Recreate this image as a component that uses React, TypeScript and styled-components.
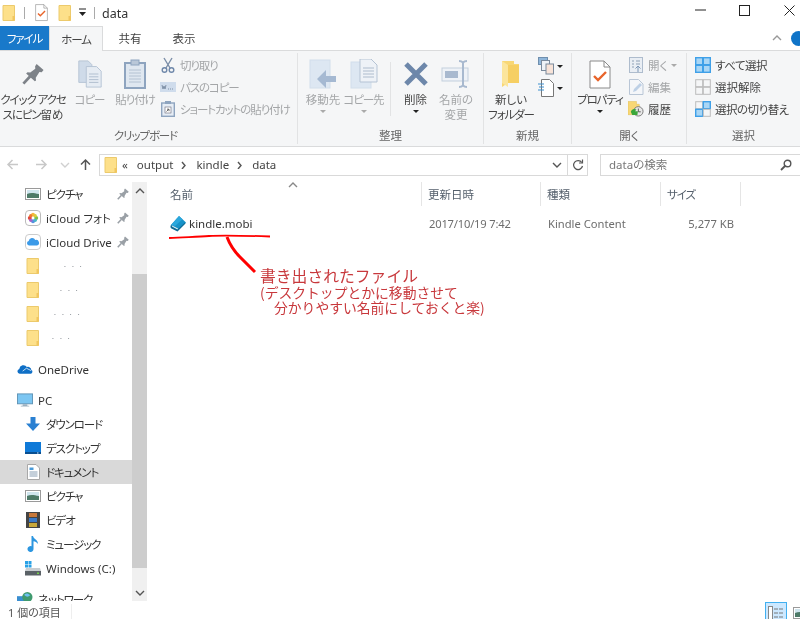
import React from "react";
import styled, { createGlobalStyle } from "styled-components";

const Global = createGlobalStyle`
  html, body { margin: 0; padding: 0; background: #fff; }
  * { box-sizing: border-box; }
`;

const Win = styled.div`
  position: relative;
  width: 800px;
  height: 619px;
  overflow: hidden;
  display: flex;
  flex-direction: column;
  background: #fff;
  color: #333;
  font-family: "Noto Sans", "Noto Sans CJK JP", sans-serif;
  font-size: 11.5px;
  line-height: 15px;
  font-feature-settings: "palt";
  filter: blur(0.25px);
`;

// katakana runs sit much tighter in the original UI font
const Kana = styled.span`
  letter-spacing: -1.1px;
`;
const Tight = styled.span`
  letter-spacing: -0.5px;
`;
const DateText = styled.span`
  letter-spacing: -0.2px;
`;

/* title bar */
const TitleBar = styled.div`
  height: 26px;
  flex: none;
  display: flex;
  align-items: center;
  padding-left: 1px;
`;
const QuickDivider = styled.span<{ $l: number }>`
  width: 1px;
  height: 12px;
  background: #aaa;
  margin: 0 10px 0 ${(p) => p.$l}px;
`;
const QuickCheck = styled.span`
  display: flex;
  margin-right: 9px;
`;
const QuickArrow = styled.svg`
  margin-left: 4px;
`;
const TitleText = styled.span`
  font-size: 12.5px;
  margin-left: -3px;
  color: #333;
`;
const WinButtons = styled.div`
  margin-left: auto;
  margin-right: -12px;
  display: flex;
  align-self: flex-start;
`;
const WinButton = styled.span<{ $w: number }>`
  width: ${(p) => p.$w}px;
  height: 20px;
  display: flex;
  align-items: center;
  justify-content: center;
`;

/* tabs */
const Tabs = styled.div`
  height: 25px;
  flex: none;
  display: flex;
  align-items: stretch;
  border-bottom: 1px solid #dadbdc;
`;
const Tab = styled.div<{ $kind?: "file" | "active" }>`
  width: ${(p) => (p.$kind === "file" ? 49 : 54)}px;
  margin-bottom: ${(p) => (p.$kind === "active" ? -1 : 0)}px;
  display: flex;
  align-items: center;
  justify-content: center;
  font-size: 11.5px;
  background: ${(p) => (p.$kind === "file" ? "#1979ca" : p.$kind === "active" ? "#f5f6f7" : "transparent")};
  color: ${(p) => (p.$kind === "file" ? "#fff" : "#444")};
  border: ${(p) => (p.$kind === "active" ? "1px solid #dadbdc" : "none")};
  border-bottom: none;
`;
const TabEnd = styled.div`
  margin-left: auto;
  display: flex;
  align-items: center;
  gap: 9px;
  margin-right: -6px;
`;
const HelpDot = styled.span`
  width: 15px;
  height: 15px;
  border-radius: 50%;
  background: #0f74c8;
`;

/* ribbon */
const Ribbon = styled.div`
  height: 96px;
  flex: none;
  display: flex;
  background: #f5f6f7;
  border-bottom: 1px solid #dadbdc;
  padding-top: 2px;
`;
const Group = styled.div<{ $w: number; $last?: boolean }>`
  width: ${(p) => p.$w}px;
  flex: none;
  display: flex;
  flex-direction: column;
  margin-bottom: 2px;
  border-right: ${(p) => (p.$last ? "none" : "1px solid #e2e3e4")};
`;
const GroupBody = styled.div<{ $pad?: number }>`
  flex: 1;
  display: flex;
  min-height: 0;
  padding-left: ${(p) => p.$pad ?? 0}px;
`;
const GroupLabel = styled.div<{ $shift?: number }>`
  height: 19px;
  text-align: center;
  color: #666;
  font-size: 11.5px;
  line-height: 22px;
  padding-right: ${(p) => p.$shift ?? 0}px;
`;
const BigButton = styled.div<{ $w: number; $off?: boolean }>`
  width: ${(p) => p.$w}px;
  flex: none;
  display: flex;
  flex-direction: column;
  align-items: center;
  text-align: center;
  white-space: nowrap;
  color: ${(p) => (p.$off ? "#a4a6a8" : "#444")};
`;
const BigIcon = styled.div`
  height: 39px;
  flex: none;
  width: 100%;
  display: flex;
  align-items: center;
  justify-content: center;
  padding-top: 3px;
`;
const BigLabel = styled.div`
  flex: none;
`;
const InnerRule = styled.span`
  width: 1px;
  height: 54px;
  margin: 9px 0 0 10px;
  background: #e2e3e4;
  flex: none;
`;
const SmallCol = styled.div<{ $w: number; $pad?: number }>`
  width: ${(p) => p.$w}px;
  flex: none;
  display: flex;
  flex-direction: column;
  padding: 1px 0 0 ${(p) => p.$pad ?? 0}px;
`;
const SmallRow = styled.div<{ $off?: boolean }>`
  height: 22px;
  display: flex;
  align-items: center;
  gap: 4px;
  white-space: nowrap;
  color: ${(p) => (p.$off ? "#a4a6a8" : "#444")};
`;
const SmallIcon = styled.span`
  width: 16px;
  height: 16px;
  flex: none;
  display: flex;
  align-items: center;
  justify-content: center;
`;
const Drop = styled.span<{ $off?: boolean }>`
  width: 0;
  height: 0;
  border-left: 3px solid transparent;
  border-right: 3px solid transparent;
  border-top: 3px solid ${(p) => (p.$off ? "#aaa" : "#222")};
  flex: none;
`;
const DropRow = styled.div`
  height: 6px;
  margin-top: 1px;
  flex: none;
  display: flex;
  align-items: center;
`;
const IconStack = styled.div`
  display: flex;
  flex-direction: column;
  gap: 4px;
  padding-top: 4px;
`;
const IconPair = styled.div`
  display: flex;
  align-items: center;
  gap: 3px;
`;

/* address bar */
const AddressRow = styled.div`
  height: 35px;
  flex: none;
  display: flex;
  align-items: center;
`;
const NavIcons = styled.div`
  width: 99px;
  flex: none;
  display: flex;
  align-items: center;
  padding-left: 6px;
`;
const NavSlot = styled.span<{ $w: number }>`
  width: ${(p) => p.$w}px;
  flex: none;
  display: flex;
  justify-content: center;
`;
const AddressBox = styled.div`
  width: 489px;
  height: 22px;
  flex: none;
  display: flex;
  align-items: center;
  border: 1px solid #d9d9d9;
  padding-left: 3px;
  font-size: 11.5px;
  color: #444;
`;
const Crumb = styled.span<{ $gap: number }>`
  margin-right: ${(p) => p.$gap}px;
`;
const Chev = styled.span<{ $gap: number }>`
  margin-right: ${(p) => p.$gap}px;
  display: flex;
`;
const AddressTail = styled.div`
  margin-left: auto;
  display: flex;
  height: 100%;
  align-items: center;
`;
const RefreshCell = styled.span`
  width: 20px;
  height: 100%;
  display: flex;
  align-items: center;
  justify-content: center;
  border-left: 1px solid #d9d9d9;
`;
const SearchBox = styled.div`
  flex: 1;
  height: 22px;
  margin-left: 12px;
  border: 1px solid #d9d9d9;
  border-right: none;
  display: flex;
  align-items: center;
  padding: 0 8px;
  color: #777;
  font-size: 11.5px;
`;
const SearchGlyph = styled.svg`
  margin-left: auto;
`;

/* body */
const Body = styled.div`
  flex: 1;
  min-height: 0;
  display: flex;
`;
const NavPane = styled.div`
  width: 132px;
  flex: none;
  overflow: hidden;
`;
const NavItem = styled.div<{ $depth?: number; $sel?: boolean; $gap?: boolean }>`
  height: 24px;
  display: flex;
  align-items: center;
  white-space: nowrap;
  font-size: 11.5px;
  padding-left: ${(p) => (p.$depth === 0 ? 17 : 25)}px;
  margin-top: ${(p) => (p.$gap ? 7 : 0)}px;
  background: ${(p) => (p.$sel ? "#d9d9d9" : "transparent")};
  color: #333;
`;
const NavIcon = styled.span`
  width: 16px;
  height: 16px;
  flex: none;
  display: flex;
  align-items: center;
  justify-content: center;
  margin-right: 5px;
`;
const Pin = styled.span`
  margin-left: auto;
  margin-right: 3px;
  display: flex;
`;
const Smudge = styled.span<{ $at: number }>`
  margin-left: ${(p) => p.$at}px;
  letter-spacing: 6px;
  font-size: 7px;
  color: #7d838a;
`;
const ScrollBar = styled.div`
  width: 15px;
  flex: none;
  background: #f0f0f0;
  display: flex;
  flex-direction: column;
`;
const ScrollArrow = styled.div`
  height: 17px;
  display: flex;
  align-items: center;
  justify-content: center;
`;
const ScrollGap = styled.div<{ $h: number }>`
  height: ${(p) => p.$h}px;
  flex: none;
`;
const ScrollThumb = styled.div`
  height: 294px;
  flex: none;
  background: #cdcdcd;
`;

const Files = styled.div`
  flex: 1;
  min-width: 0;
  padding-left: 13px;
`;
const HeaderRow = styled.div`
  height: 27px;
  display: flex;
  position: relative;
`;
const HeadCell = styled.div<{ $w: number; $pad?: number; $last?: boolean }>`
  width: ${(p) => p.$w}px;
  flex: none;
  height: 24px;
  padding-left: ${(p) => p.$pad ?? 6}px;
  display: flex;
  align-items: center;
  border-right: ${(p) => (p.$last ? "none" : "1px solid #e5e5e5")};
  color: #55606c;
`;
const SortMark = styled.span`
  position: absolute;
  left: 128px;
  top: -1px;
  display: flex;
`;
const FileRow = styled.div`
  height: 22px;
  margin-top: 3px;
  display: flex;
  align-items: center;
  color: #6d6d6d;
  font-size: 11.2px;
`;
const FileCell = styled.div<{ $w: number; $right?: boolean }>`
  width: ${(p) => p.$w}px;
  flex: none;
  padding: 0 7px;
  white-space: nowrap;
  text-align: ${(p) => (p.$right ? "right" : "left")};
`;
const FileName = styled(FileCell)`
  display: flex;
  align-items: center;
  gap: 2px;
  color: #333;
  font-size: 11.5px;
  padding-left: 10px;
`;

/* status bar */
const StatusBar = styled.div`
  height: 18px;
  flex: none;
  display: flex;
  align-items: flex-start;
  padding-left: 8px;
  font-size: 11px;
  color: #555;
`;
const StatusText = styled.span`
  width: 64px;
  height: 15px;
  margin-top: 3px;
  line-height: 18px;
  border-right: 1px solid #eee;
`;
const ViewButtons = styled.div`
  margin-left: auto;
  display: flex;
  margin-right: -12px;
  margin-top: 1px;
  gap: 3px;
`;
const ViewButton = styled.span<{ $on?: boolean }>`
  width: 22px;
  height: 17px;
  display: flex;
  align-items: flex-start;
  justify-content: center;
  padding-top: 3px;
  background: ${(p) => (p.$on ? "#cce8ff" : "transparent")};
  border: 1px solid ${(p) => (p.$on ? "#42b0f0" : "transparent")};
  border-bottom: none;
`;

/* hand annotation over the list */
const Annotation = styled.div`
  position: absolute;
  left: 260px;
  top: 267px;
  color: #c8383c;
  font-family: "Noto Sans CJK JP", sans-serif;
  font-feature-settings: normal;
  white-space: nowrap;
`;
const NoteHead = styled.div`
  font-size: 15.8px;
  line-height: 17.5px;
`;
const NoteLine = styled.div<{ $indent?: boolean }>`
  font-size: 13.8px;
  line-height: 15.5px;
  padding-left: ${(p) => (p.$indent ? 14 : 0)}px;
`;
const Scribble = styled.svg`
  position: absolute;
  left: 160px;
  top: 225px;
`;

/* drawings */
const Folder = () => (
  <svg width="16" height="16" viewBox="0 0 16 16">
    <path d="M2 .5h11.500v15H2z" fill="#fde08a" stroke="#ecca6c" strokeWidth="1" />
    <path d="M11.500 11h2.500v4.500h-2.500z" fill="#f0c65f" />
  </svg>
);
const Pinned = ({ c = "#9aa0a6", s = 12 }: { c?: string; s?: number }) => (
  <svg width={s} height={s} viewBox="0 0 24 24">
    <path d="M16 1l7.500 6.500-2 2.500-2.500-.3-4 6.300.3 3-1.300 1L4.500 11.500 6 10l3 .3 5.500-4-.2-2.800z" fill={c} />
    <path d="M9 14.500L1.500 22.500" stroke={c} strokeWidth="3" />
  </svg>
);
const Picture = () => (
  <svg width="16" height="14" viewBox="0 0 16 14">
    <rect x=".5" y="1.500" width="15" height="11" fill="#fff" stroke="#9a9a9a" />
    <rect x="2" y="3" width="12" height="4" fill="#cfe5ee" />
    <path d="M2 7c3-1.500 6-1.500 12 0v4H2z" fill="#4d7a68" />
  </svg>
);
const Photos = () => (
  <svg width="16" height="16" viewBox="0 0 16 16">
    <rect x=".5" y=".5" width="15" height="15" rx="3.500" fill="#fff" stroke="#bbb" />
    <circle cx="8" cy="4.800" r="2" fill="#f6b73c" />
    <circle cx="11.200" cy="8" r="2" fill="#7cc04b" />
    <circle cx="8" cy="11.200" r="2" fill="#5a8fe0" />
    <circle cx="4.800" cy="8" r="2" fill="#e0483e" />
    <circle cx="10.300" cy="5.700" r="1.600" fill="#d8cd3a" />
    <circle cx="10.300" cy="10.300" r="1.600" fill="#47b8c8" />
    <circle cx="5.700" cy="10.300" r="1.600" fill="#a862c8" />
    <circle cx="5.700" cy="5.700" r="1.600" fill="#ee7a30" />
  </svg>
);
const ICloud = () => (
  <svg width="16" height="16" viewBox="0 0 16 16">
    <rect x=".5" y=".5" width="15" height="15" rx="3.500" fill="#fff" stroke="#ccc" />
    <path d="M4 11.500a2.300 2.300 0 0 1-.3-4.500A3.500 3.500 0 0 1 10.300 6a2.800 2.800 0 0 1 1.700 5.500z" fill="#3b9ae8" />
  </svg>
);
const OneDrive = () => (
  <svg width="17" height="12" viewBox="0 0 17 12">
    <path d="M2.800 11a2.600 2.600 0 0 1-.4-5.100A4.400 4.400 0 0 1 10.500 4a3.400 3.400 0 0 1 4.700 3A2.100 2.100 0 0 1 14.500 11z" fill="#0f6fc6" />
    <path d="M6 8.200l4-3 5 2.500" fill="none" stroke="#fff" strokeWidth=".8" />
  </svg>
);
const Pc = () => (
  <svg width="17" height="15" viewBox="0 0 17 15">
    <rect x=".5" y=".5" width="16" height="10.500" fill="#7cc6f2" stroke="#5f93b5" />
    <path d="M6 11.500h5v1.500h2v1H4v-1h2z" fill="#9bb0bf" />
  </svg>
);
const Download = () => (
  <svg width="16" height="16" viewBox="0 0 16 16">
    <path d="M5.500 1h5v6.500H15L8 15 1 7.500h4.500z" fill="#2a80d2" />
  </svg>
);
const Desktop = () => (
  <svg width="16" height="12" viewBox="0 0 16 12">
    <rect x="0" y="0" width="16" height="11" fill="#0f7ad8" />
    <rect x="0" y="10" width="16" height="2" fill="#0a4f90" />
    <rect x="12" y="10.500" width="1.500" height="1" fill="#d0e8ff" />
  </svg>
);
const Doc = () => (
  <svg width="13" height="16" viewBox="0 0 13 16">
    <path d="M.5.500h8.500l3.500 3.500v11.500H.5z" fill="#fff" stroke="#a8a8a8" />
    <path d="M2.500 3.500h4v2.500h-4z" fill="#4a9ad8" />
    <path d="M2.500 8h8M2.500 10h8M2.500 12h8" stroke="#8aa0b5" />
  </svg>
);
const Video = () => (
  <svg width="14" height="16" viewBox="0 0 14 16">
    <rect width="14" height="16" fill="#444" />
    <rect x="3" y="1" width="8" height="4" fill="#c8783a" />
    <rect x="3" y="6" width="8" height="4" fill="#3a7ac8" />
    <rect x="3" y="11" width="8" height="4" fill="#c8a83a" />
  </svg>
);
const Music = () => (
  <svg width="12" height="16" viewBox="0 0 12 16">
    <path d="M4.500 0h1.500c.5 3 5 3.500 5 8-1-1.500-3-2.500-4.500-2.700V13a3 3 0 1 1-2-2.800z" fill="#2c96e0" />
  </svg>
);
const Drive = () => (
  <svg width="16" height="15" viewBox="0 0 16 15">
    <rect x="0" y="0" width="3" height="3" fill="#29a1e6" />
    <rect x="3.500" y="0" width="3" height="3" fill="#29a1e6" />
    <rect x="0" y="3.500" width="3" height="3" fill="#29a1e6" />
    <rect x="3.500" y="3.500" width="3" height="3" fill="#29a1e6" />
    <path d="M1 7h14l1 3H0z" fill="#c9cdd0" />
    <rect x="0" y="10" width="16" height="4.500" fill="#5a6166" />
    <rect x="12" y="11.500" width="2" height="1.500" fill="#74d04a" />
  </svg>
);
const Network = () => (
  <svg width="17" height="16" viewBox="0 0 17 16">
    <rect x="0" y="5" width="11" height="8" fill="#3a8ed0" />
    <circle cx="11" cy="6" r="5.500" fill="#3f9a6e" />
    <path d="M8 3c2-1.500 4-1 6 1-2 2-4 2-6 0z" fill="#6cc0f0" />
  </svg>
);
const Chevron = ({ dir, c = "#555" }: { dir: "up" | "down" | "right"; c?: string }) => {
  const d = dir === "up" ? "M1 6l4-4 4 4" : dir === "down" ? "M1 2l4 4 4-4" : "M3 1l3 3.500-3 3.500";
  return (
    <svg width="10" height="8" viewBox="0 0 10 8">
      <path d={d} fill="none" stroke={c} strokeWidth="1.400" />
    </svg>
  );
};
const Copy = () => (
  <svg width="26" height="28" viewBox="0 0 26 30">
    <path d="M1 1h10l4 4v19H1z" fill="#cfdbe9" stroke="#b5c3d4" />
    <path d="M9 7h11l5 5v17H9z" fill="#e6ecf3" stroke="#b5c3d4" />
    <path d="M12 15h10M12 18h10M12 21h10M12 24h10" stroke="#aebccd" />
  </svg>
);
const Paste = () => (
  <svg width="22" height="30" viewBox="0 0 22 30">
    <rect x="1" y="4" width="20" height="25" fill="#dfe7f0" stroke="#8ea4bf" strokeWidth="2" />
    <rect x="7" y="1" width="8" height="5" fill="#b9c7d8" stroke="#8ea4bf" />
    <path d="M5 11h12M5 14h12M5 17h12M5 20h12M5 23h12" stroke="#b4c2d2" />
  </svg>
);
const MoveTo = () => (
  <svg width="28" height="30" viewBox="0 0 28 30">
    <rect x="1" y="1" width="20" height="28" fill="#dde7f2" stroke="#d2deeb" />
    <path d="M27 17h-10v-6l-9 9 9 9v-6h10z" fill="#a5b9d2" />
  </svg>
);
const CopyTo = () => (
  <svg width="28" height="30" viewBox="0 0 28 30">
    <rect x="1" y="3" width="20" height="26" fill="#dde7f2" stroke="#d2deeb" />
    <path d="M10 0h11l6 6v17H10z" fill="#eef2f7" stroke="#b5c3d4" />
    <path d="M13 9h11M13 12h11M13 15h11M13 18h11" stroke="#aebccd" />
  </svg>
);
const BigX = () => (
  <svg width="26" height="26" viewBox="0 0 26 26">
    <path d="M3 3l20 20M23 3L3 23" stroke="#6d87aa" strokeWidth="5" />
  </svg>
);
const Rename = () => (
  <svg width="30" height="30" viewBox="0 0 30 30">
    <rect x="1" y="9" width="26" height="13" fill="#eef2f7" stroke="#c3cfdd" />
    <rect x="4" y="12" width="13" height="7" fill="#a8b9cf" />
    <path d="M18 2c2 0 3 .5 4 1.500 1-1 2-1.500 4-1.500M22 3.500v23M18 28c2 0 3-.5 4-1.500 1 1 2 1.500 4 1.500" fill="none" stroke="#a8b9cf" strokeWidth="2" />
  </svg>
);
const NewFolder = () => (
  <svg width="20" height="28" viewBox="0 0 20 28">
    <path d="M1 1h12v3h5v19H7l-6 4z" fill="#f8d775" />
    <path d="M1 1l6 4v22l-6-4z" fill="#fbe59c" />
    <path d="M7 5h11v18H7z" fill="#f6cf63" />
  </svg>
);
const Props = ({ s = 22 }: { s?: number }) => (
  <svg width={s} height={(s * 29) / 22} viewBox="0 0 22 29">
    <path d="M1 1h14l6 6v21H1z" fill="#fff" stroke="#8a8a8a" />
    <path d="M15 1v6h6" fill="none" stroke="#8a8a8a" />
    <path d="M5 16l4 4 8-8" fill="none" stroke="#e8642a" strokeWidth="2.400" />
  </svg>
);
const SmallGlyph = ({ kind }: { kind: string }) => {
  if (kind === "cut")
    return (
      <svg width="14" height="16" viewBox="0 0 14 16">
        <path d="M3 1l6 10M11 1L5 11" stroke="#7b8ea8" strokeWidth="1.400" />
        <circle cx="3.500" cy="13" r="2.300" fill="none" stroke="#6f88aa" strokeWidth="1.400" />
        <circle cx="10.500" cy="13" r="2.300" fill="none" stroke="#6f88aa" strokeWidth="1.400" />
      </svg>
    );
  if (kind === "path")
    return (
      <svg width="16" height="10" viewBox="0 0 16 10">
        <rect width="16" height="10" fill="#cfdcec" />
        <path d="M2 3l1 4 1-3 1 3 1-4M8 7h1M10 7h1M12 7h1" stroke="#7f91a8" fill="none" />
      </svg>
    );
  if (kind === "shortcut")
    return (
      <svg width="14" height="16" viewBox="0 0 14 16">
        <rect x=".7" y="2" width="12.600" height="13.300" fill="#e6edf5" stroke="#8ea4bf" strokeWidth="1.400" />
        <rect x="4" y="0" width="6" height="3" fill="#8ea4bf" />
        <rect x="4" y="6" width="6" height="6" fill="#fff" stroke="#667" strokeWidth=".6" />
        <path d="M5.500 10.500l2-2M6 8.200h2v2" stroke="#444" fill="none" strokeWidth=".8" />
      </svg>
    );
  if (kind === "open")
    return (
      <svg width="14" height="16" viewBox="0 0 14 16">
        <rect x=".5" y=".5" width="13" height="15" fill="#e9eef4" stroke="#aebccd" />
        <path d="M3 4h2M3 7h2M3 10h2M7 4h4M7 7h4" stroke="#8ea0b5" />
        <path d="M9 15V9m-2.500 2.500L9 9l2.500 2.500" stroke="#7d97b6" fill="none" />
      </svg>
    );
  if (kind === "edit")
    return (
      <svg width="15" height="16" viewBox="0 0 15 16">
        <path d="M.5.500h9l4.500 4.500v10.500H.5z" fill="#f4f6f9" stroke="#b9c6d6" />
        <path d="M4 13l1-3 6-6 2 2-6 6z" fill="#bdd0e6" />
      </svg>
    );
  if (kind === "history")
    return (
      <svg width="17" height="16" viewBox="0 0 17 16">
        <path d="M0 0h9v3h3v4H7v7H0z" fill="#f8d775" stroke="#dcb84f" strokeWidth=".5" />
        <circle cx="11" cy="10.500" r="5" fill="#e8e8e8" stroke="#777" />
        <path d="M11 7.500v3.500h2.500" stroke="#555" fill="none" />
        <path d="M3 11a4 4 0 0 1 6-2.500l-1.500 2H10.500l-.5 4H4.500z" fill="#3aa63a" />
      </svg>
    );
  const cells = kind === "all" ? [1, 1, 1, 1] : kind === "none" ? [0, 0, 0, 0] : [0, 1, 1, 0];
  return (
    <svg width="16" height="16" viewBox="0 0 16 16">
      {cells.map((on, i) => (
        <rect
          key={i}
          x={i % 2 === 0 ? 0.7 : 8.3}
          y={i < 2 ? 0.7 : 8.3}
          width="7"
          height="7"
          fill={on ? "#a9d6f5" : "#f5f6f7"}
          stroke={on ? "#3fa0e8" : "#bcbcbc"}
          strokeWidth={on ? 1.4 : 1}
        />
      ))}
    </svg>
  );
};
const NewItemA = () => (
  <svg width="16" height="18" viewBox="0 0 16 18">
    <rect x=".5" y=".5" width="9" height="7" fill="#8fb6da" stroke="#6f8fae" />
    <rect x="3.500" y="3.500" width="8" height="10" fill="#eef2f7" stroke="#7a8a9c" />
    <rect x="8" y="7" width="7.500" height="10" fill="#f7e3d8" stroke="#7a8a9c" />
  </svg>
);
const NewItemB = () => (
  <svg width="16" height="18" viewBox="0 0 16 18">
    <path d="M3.500.500h8l4 4v13h-12z" fill="#fff" stroke="#777" />
    <path d="M0 5h6M1 8h5M0 11h6" stroke="#3d8fd0" strokeWidth="1.200" />
  </svg>
);
const Arrow = ({ dir, c }: { dir: "left" | "right" | "up"; c: string }) => {
  const d =
    dir === "left"
      ? "M12 6.500H2M6.500 2L2 6.500 6.500 11"
      : dir === "right"
      ? "M1 6.500h10M6.500 2L11 6.500 6.500 11"
      : "M6.500 12V2M2 6.500L6.500 2 11 6.500";
  return (
    <svg width="13" height="13" viewBox="0 0 13 13">
      <path d={d} fill="none" stroke={c} strokeWidth="1.500" />
    </svg>
  );
};

type Nav = {
  label?: string;
  kana?: boolean;
  icon: React.ReactNode;
  depth?: number;
  pin?: boolean;
  sel?: boolean;
  gap?: boolean;
  smudge?: string;
  at?: number;
};

const navItems: Nav[] = [
  { label: "ピクチャ", kana: true, icon: <Picture />, pin: true },
  { label: "iCloud フォト", icon: <Photos />, pin: true },
  { label: "iCloud Drive", icon: <ICloud />, pin: true },
  { icon: <Folder />, smudge: "···", at: 18 },
  { icon: <Folder />, smudge: "···", at: 14 },
  { icon: <Folder />, smudge: "····", at: 8 },
  { icon: <Folder />, smudge: "···", at: 6 },
  { label: "OneDrive", icon: <OneDrive />, depth: 0, gap: true },
  { label: "PC", icon: <Pc />, depth: 0, gap: true },
  { label: "ダウンロード", kana: true, icon: <Download /> },
  { label: "デスクトップ", kana: true, icon: <Desktop /> },
  { label: "ドキュメント", kana: true, icon: <Doc />, sel: true },
  { label: "ピクチャ", kana: true, icon: <Picture /> },
  { label: "ビデオ", kana: true, icon: <Video /> },
  { label: "ミュージック", kana: true, icon: <Music /> },
  { label: "Windows (C:)", icon: <Drive /> },
  { label: "ネットワーク", kana: true, icon: <Network />, depth: 0, gap: true },
];

export default function App() {
  return (
    <>
      <Global />
      <Win>
        <TitleBar>
          <Folder />
          <QuickDivider $l={7} />
          <QuickCheck><Props s={13} /></QuickCheck>
          <Folder />
          <QuickArrow width="12" height="10" viewBox="0 0 12 10">
            <path d="M2 1h7" stroke="#222" />
            <path d="M2 4h7L5.500 8z" fill="#222" />
          </QuickArrow>
          <QuickDivider $l={5} />
          <TitleText>data</TitleText>
          <WinButtons>
            <WinButton $w={44}>
              <svg width="11" height="2" viewBox="0 0 11 2"><path d="M0 1h11" stroke="#222" /></svg>
            </WinButton>
            <WinButton $w={45}>
              <svg width="11" height="11" viewBox="0 0 11 11"><rect x=".5" y=".5" width="10" height="10" fill="none" stroke="#222" /></svg>
            </WinButton>
            <WinButton $w={45}>
              <svg width="11" height="11" viewBox="0 0 11 11"><path d="M.5.500l10 10M10.500.500l-10 10" stroke="#222" /></svg>
            </WinButton>
          </WinButtons>
        </TitleBar>

        <Tabs>
          <Tab $kind="file"><Kana>ファイル</Kana></Tab>
          <Tab $kind="active"><Kana>ホーム</Kana></Tab>
          <Tab>共有</Tab>
          <Tab>表示</Tab>
          <TabEnd>
            <Chevron dir="up" c="#999" />
            <HelpDot />
          </TabEnd>
        </Tabs>

        <Ribbon>
          <Group $w={298}>
            <GroupBody>
              <BigButton $w={66}>
                <BigIcon><Pinned c="#7d8288" s={22} /></BigIcon>
                <BigLabel><Kana>クイック アクセ</Kana><br /><Kana>スにピン</Kana>留め</BigLabel>
              </BigButton>
              <BigButton $w={47} $off>
                <BigIcon><Copy /></BigIcon>
                <BigLabel><Kana>コピー</Kana></BigLabel>
              </BigButton>
              <BigButton $w={44} $off>
                <BigIcon><Paste /></BigIcon>
                <BigLabel><Kana>貼り付け</Kana></BigLabel>
              </BigButton>
              <SmallCol $w={138} $pad={3}>
                <SmallRow $off><SmallIcon><SmallGlyph kind="cut" /></SmallIcon><Kana>切り取り</Kana></SmallRow>
                <SmallRow $off><SmallIcon><SmallGlyph kind="path" /></SmallIcon><Kana>パスのコピー</Kana></SmallRow>
                <SmallRow $off><SmallIcon><SmallGlyph kind="shortcut" /></SmallIcon><Kana>ショートカットの貼り付け</Kana></SmallRow>
              </SmallCol>
            </GroupBody>
            <GroupLabel $shift={6}><Kana>クリップボード</Kana></GroupLabel>
          </Group>

          <Group $w={186}>
            <GroupBody>
              <BigButton $w={50} $off>
                <BigIcon><MoveTo /></BigIcon>
                <BigLabel>移動先</BigLabel>
                <DropRow><Drop $off /></DropRow>
              </BigButton>
              <BigButton $w={32} $off>
                <BigIcon><CopyTo /></BigIcon>
                <BigLabel><Kana>コピー</Kana>先</BigLabel>
                <DropRow><Drop $off /></DropRow>
              </BigButton>
              <InnerRule />
              <BigButton $w={49}>
                <BigIcon><BigX /></BigIcon>
                <BigLabel>削除</BigLabel>
                <DropRow><Drop /></DropRow>
              </BigButton>
              <BigButton $w={32} $off>
                <BigIcon><Rename /></BigIcon>
                <BigLabel>名前の<br />変更</BigLabel>
              </BigButton>
            </GroupBody>
            <GroupLabel>整理</GroupLabel>
          </Group>

          <Group $w={88}>
            <GroupBody>
              <BigButton $w={54}>
                <BigIcon><NewFolder /></BigIcon>
                <BigLabel>新しい<br /><Kana>フォルダー</Kana></BigLabel>
              </BigButton>
              <IconStack>
                <IconPair><NewItemA /><Drop /></IconPair>
                <IconPair><NewItemB /><Drop /></IconPair>
              </IconStack>
            </GroupBody>
            <GroupLabel>新規</GroupLabel>
          </Group>

          <Group $w={115}>
            <GroupBody>
              <BigButton $w={56}>
                <BigIcon><Props /></BigIcon>
                <BigLabel><Kana>プロパティ</Kana></BigLabel>
                <DropRow><Drop /></DropRow>
              </BigButton>
              <SmallCol $w={58}>
                <SmallRow $off><SmallIcon><SmallGlyph kind="open" /></SmallIcon>開く <Drop $off /></SmallRow>
                <SmallRow $off><SmallIcon><SmallGlyph kind="edit" /></SmallIcon>編集</SmallRow>
                <SmallRow><SmallIcon><SmallGlyph kind="history" /></SmallIcon>履歴</SmallRow>
              </SmallCol>
            </GroupBody>
            <GroupLabel>開く</GroupLabel>
          </Group>

          <Group $w={113} $last>
            <GroupBody $pad={8}>
              <SmallCol $w={104}>
                <SmallRow><SmallIcon><SmallGlyph kind="all" /></SmallIcon><Tight>すべて選択</Tight></SmallRow>
                <SmallRow><SmallIcon><SmallGlyph kind="none" /></SmallIcon>選択解除</SmallRow>
                <SmallRow><SmallIcon><SmallGlyph kind="swap" /></SmallIcon><Tight>選択の切り替え</Tight></SmallRow>
              </SmallCol>
            </GroupBody>
            <GroupLabel>選択</GroupLabel>
          </Group>
        </Ribbon>

        <AddressRow>
          <NavIcons>
            <NavSlot $w={13}><Arrow dir="left" c="#c8c8c8" /></NavSlot>
            <NavSlot $w={16} />
            <NavSlot $w={13}><Arrow dir="right" c="#c8c8c8" /></NavSlot>
            <NavSlot $w={11} />
            <NavSlot $w={12}><Chevron dir="down" c="#d0d0d0" /></NavSlot>
            <NavSlot $w={8} />
            <NavSlot $w={13}><Arrow dir="up" c="#555" /></NavSlot>
          </NavIcons>
          <AddressBox>
            <Folder />
            <Crumb $gap={9}>&nbsp;«</Crumb>
            <Crumb $gap={6}>output</Crumb>
            <Chev $gap={7}><Chevron dir="right" /></Chev>
            <Crumb $gap={6}>kindle</Crumb>
            <Chev $gap={7}><Chevron dir="right" /></Chev>
            <Crumb $gap={0}>data</Crumb>
            <AddressTail>
              <NavSlot $w={20}><Chevron dir="down" /></NavSlot>
              <RefreshCell>
                <svg width="12" height="12" viewBox="0 0 12 12">
                  <path d="M9.800 3.500A4.500 4.500 0 1 0 10.500 7" fill="none" stroke="#555" strokeWidth="1.200" />
                  <path d="M10.500 .5v3.500H7" fill="none" stroke="#555" strokeWidth="1.200" />
                </svg>
              </RefreshCell>
            </AddressTail>
          </AddressBox>
          <SearchBox>
            dataの検索
            <SearchGlyph width="12" height="12" viewBox="0 0 12 12">
              <circle cx="7.500" cy="4.500" r="3.300" fill="none" stroke="#555" strokeWidth="1.400" />
              <path d="M5 7l-4 4" stroke="#555" strokeWidth="1.800" />
            </SearchGlyph>
          </SearchBox>
        </AddressRow>

        <Body>
          <NavPane>
            {navItems.map((it, i) => (
              <NavItem key={i} $depth={it.depth} $sel={it.sel} $gap={it.gap}>
                <NavIcon>{it.icon}</NavIcon>
                {it.kana ? <Kana>{it.label}</Kana> : it.label}
                {it.smudge && <Smudge $at={it.at ?? 0}>{it.smudge}</Smudge>}
                {it.pin && <Pin><Pinned /></Pin>}
              </NavItem>
            ))}
          </NavPane>
          <ScrollBar>
            <ScrollArrow><Chevron dir="up" /></ScrollArrow>
            <ScrollGap $h={75} />
            <ScrollThumb />
            <ScrollGap $h={16} />
            <ScrollArrow><Chevron dir="down" /></ScrollArrow>
          </ScrollBar>
          <Files>
            <HeaderRow>
              <SortMark><Chevron dir="up" c="#888" /></SortMark>
              <HeadCell $w={262} $pad={10}>名前</HeadCell>
              <HeadCell $w={119}>更新日時</HeadCell>
              <HeadCell $w={120}>種類</HeadCell>
              <HeadCell $w={80}><Kana>サイズ</Kana></HeadCell>
              <HeadCell $w={20} $last />
            </HeaderRow>
            <FileRow>
              <FileName $w={262}>
                <svg width="17" height="17" viewBox="0 0 17 17">
                  <path d="M9 1l7 6.500-8.500 8L1 10z" fill="#1792c8" />
                  <path d="M9 1l3.500 3.200L5 11 1 10z" fill="#2ba7dc" />
                  <path d="M1 10c-1 1.500-.5 3 .5 3.500l6 3 8-8-.5-1-7 6.500z" fill="#0f6a94" />
                  <path d="M2 11.500l5.500 3 .5-1-6-3z" fill="#e6f4f9" />
                </svg>
                kindle.mobi
              </FileName>
              <FileCell $w={119}><DateText>2017/10/19 7:42</DateText></FileCell>
              <FileCell $w={120}>Kindle Content</FileCell>
              <FileCell $w={80} $right>5,277 KB</FileCell>
            </FileRow>
          </Files>
        </Body>

        <StatusBar>
          <StatusText>1 個の項目</StatusText>
          <ViewButtons>
            <ViewButton $on>
              <svg width="16" height="14" viewBox="0 0 16 14">
                <rect x=".5" y=".5" width="4" height="13" fill="#fff" stroke="#888" />
                <path d="M6 3h4M11 3h4M6 7h4M11 7h4M6 11h4M11 11h4" stroke="#777" />
              </svg>
            </ViewButton>
            <ViewButton><Picture /></ViewButton>
          </ViewButtons>
        </StatusBar>

        <Scribble width="120" height="50" viewBox="0 0 120 50">
          <path d="M9 13c15-1 28-1 40-2s18-1 61 .5" fill="none" stroke="#f00" strokeWidth="1.800" />
          <path d="M67 12c3 8 7 14 13 20l15 15" fill="none" stroke="#f00" strokeWidth="3" />
        </Scribble>
        <Annotation>
          <NoteHead>書き出されたファイル</NoteHead>
          <NoteLine>(デスクトップとかに移動させて</NoteLine>
          <NoteLine $indent>分かりやすい名前にしておくと楽)</NoteLine>
        </Annotation>
      </Win>
    </>
  );
}
